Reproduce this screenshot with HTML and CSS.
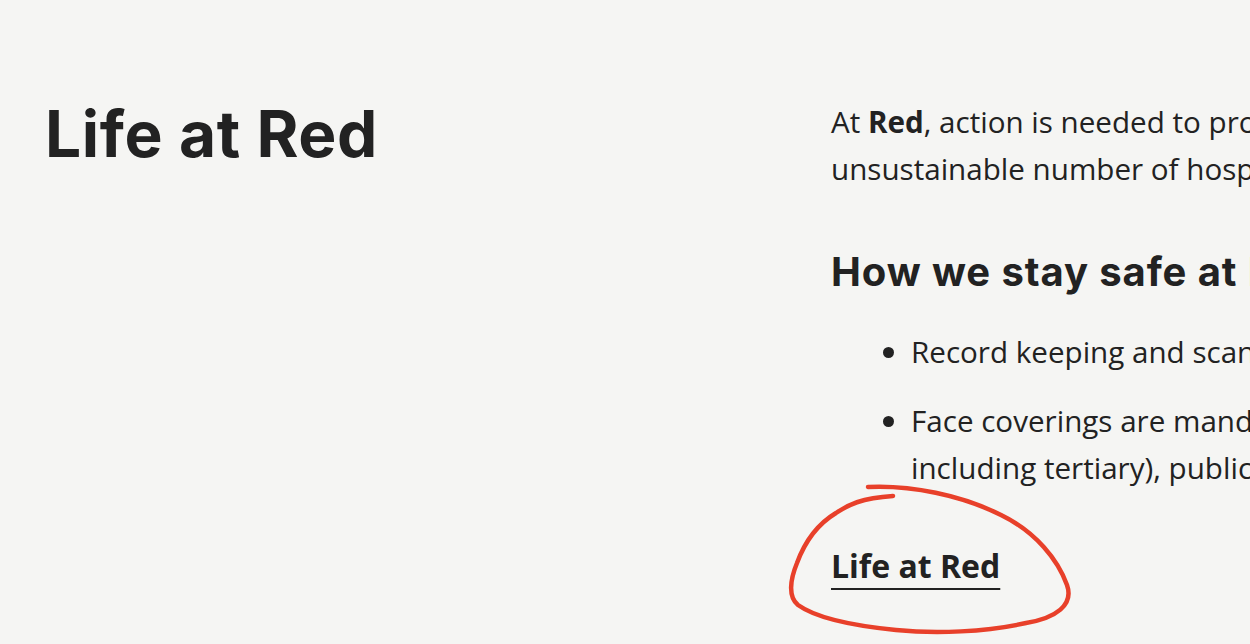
FILE: index.html
```html
<!DOCTYPE html>
<html lang="en">
<head>
<meta charset="utf-8">
<title>Life at Red</title>
<link rel="stylesheet" href="styles.css">
</head>
<body>
<main class="page">
  <h1 class="title">Life at Red</h1>
  <section class="content">
    <p class="intro">At <strong>Red</strong>, action is needed to protect the whole community from an unsustainable number of hospitalisations and deaths.</p>
    <h2 class="subtitle">How we stay safe at Red</h2>
    <ul class="rules">
      <li>Record keeping and scanning QR codes is mandatory.</li>
      <li>Face coverings are mandatory in education settings (schools, including tertiary), public transport and rideshare.</li>
    </ul>
    <div class="more">
      <a class="more-link" href="#">Life at Red</a>
      <svg class="scribble" width="290" height="160" viewBox="0 0 290 160" aria-hidden="true">
        <path d="M82 7 C 125 5, 175 15, 215 35 C 250 52, 272 80, 281 105 C 288 125, 270 138, 240 143 C 200 152, 150 154, 110 150 C 70 146, 30 138, 12 125 C 2 117, 4 100, 11 83 C 18 64, 30 45, 50 33 C 62 25, 75 18, 107 16" fill="none" stroke="#e8402a" stroke-width="4.5" stroke-linecap="round" stroke-linejoin="round"/>
      </svg>
    </div>
  </section>
</main>
</body>
</html>
```
FILE: styles.css
```css
html, body {
  margin: 0;
  padding: 0;
  background: #f5f5f3;
  overflow: hidden;
}
body {
  width: 1250px;
  height: 644px;
  color: #222222;
  font-family: "Open Sans", "Noto Sans", sans-serif;
}
.page {
  display: flex;
  align-items: flex-start;
  padding: 0 0 0 45px;
}
.title {
  flex: 0 0 786px;
  margin: 0;
  padding-top: 94px;
  font-family: "Inter", "Noto Sans", sans-serif;
  font-weight: 700;
  font-size: 64px;
  line-height: 80px;
  letter-spacing: 0.6px;
  color: #222222;
}
.content {
  flex: 0 0 960px;
  padding-top: 98px;
}
.intro {
  margin: 0;
  font-size: 29.6px;
  line-height: 47px;
}
.intro strong {
  font-weight: 700;
}
.subtitle {
  margin: 52px 0 0;
  font-family: "Inter", "Noto Sans", sans-serif;
  font-weight: 700;
  font-size: 40px;
  line-height: 56px;
  letter-spacing: 0.9px;
}
.rules {
  margin: 28px 0 0;
  padding-left: 80px;
  font-size: 29.6px;
  line-height: 47px;
}
.rules li + li {
  margin-top: 22px;
}
.more {
  position: relative;
  margin-top: 51px;
  font-size: 32px;
  line-height: 47px;
}
.more-link {
  color: #222222;
  font-weight: 700;
  text-decoration: underline;
  text-decoration-thickness: 2px;
  text-underline-offset: 10px;
}
.scribble {
  position: absolute;
  left: -45px;
  top: -62px;
  pointer-events: none;
}
```
